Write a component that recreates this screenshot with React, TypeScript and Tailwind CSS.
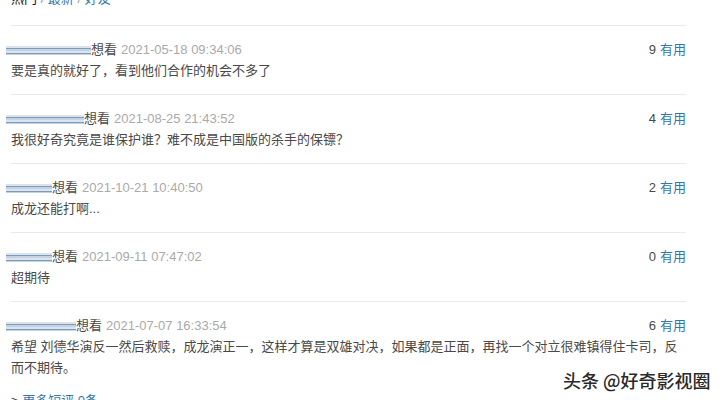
const comments = [
  { nameW: 85, date: '2021-05-18 09:34:06', votes: 9, text: '要是真的就好了，看到他们合作的机会不多了' },
  { nameW: 78, date: '2021-08-25 21:43:52', votes: 4, text: '我很好奇究竟是谁保护谁？难不成是中国版的杀手的保镖？' },
  { nameW: 46, date: '2021-10-21 10:40:50', votes: 2, text: '成龙还能打啊...' },
  { nameW: 46, date: '2021-09-11 07:47:02', votes: 0, text: '超期待' },
  {
    nameW: 70,
    date: '2021-07-07 16:33:54',
    votes: 6,
    text: '希望 刘德华演反一然后救赎，成龙演正一，这样才算是双雄对决，如果都是正面，再找一个对立很难镇得住卡司，反而不期待。',
  },
];

function BlurName({ w }: { w: number }) {
  return (
    <span
      className="inline-block h-[9px] -ml-[5px] blur-[0.6px] bg-[repeating-linear-gradient(to_bottom,#dbe4ee_0px,#dbe4ee_2px,#7b9cbc_2px,#7b9cbc_3px,#c5d3e1_3px,#c5d3e1_5px)]"
      style={{ width: w }}
    />
  );
}

export default function App() {
  return (
    <div className="relative w-[726px] h-[400px] overflow-hidden bg-white font-['Liberation_Sans','Noto_Sans_CJK_SC',sans-serif] text-[13px] text-[#494949]">
      <div className="w-[675px] ml-[11px]">
        {/* tabs, mostly scrolled off */}
        <div className="-mt-[11px] h-[20px] leading-[20px] mb-[16px]">
          <span className="text-[#111]">热门</span>
          <span className="text-[#999]"> / </span>
          <span className="text-[#37a]">最新</span>
          <span className="text-[#999]"> / </span>
          <span className="text-[#37a]">好友</span>
        </div>

        {comments.map((c, i) => (
          <div key={i} className="border-t border-[#eaeaea] pt-[14px] pb-[13px]">
            <div className="flex items-center justify-between h-[20px] leading-[20px]">
              <div className="flex items-center">
                <BlurName w={c.nameW} />
                <span className="text-[#494949]">想看</span>
                <span className="ml-[4px] text-[#aaa]">{c.date}</span>
              </div>
              <div>
                <span className="text-[#494949]">{c.votes}</span>
                <span className="ml-[4px] text-[#37a]">有用</span>
              </div>
            </div>
            <p className="leading-[21px] max-w-[670px]">{c.text}</p>
          </div>
        ))}

        <div className="leading-[20px]">
          <span className="text-[#494949]">&gt; </span>
          <span className="text-[#37a]">更多短评 0条</span>
        </div>
      </div>

      <div className="absolute left-[563px] top-[368px] text-[18px] leading-[24px] font-medium text-[#2a2a2a] [text-shadow:0_0_2px_#fff,0_0_2px_#fff] font-['Noto_Sans_CJK_SC',sans-serif]">
        头条 @好奇影视圈
      </div>
    </div>
  );
}
